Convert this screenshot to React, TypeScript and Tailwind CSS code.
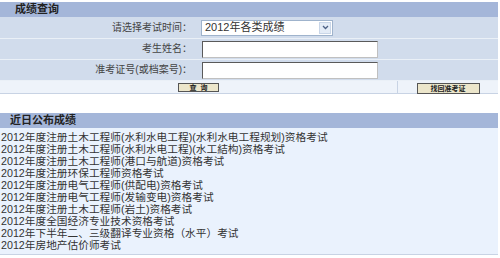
import React from "react";

const items = [
  "2012年度注册土木工程师(水利水电工程)(水利水电工程规划)资格考试",
  "2012年度注册土木工程师(水利水电工程)(水工結构)资格考试",
  "2012年度注册土木工程师(港口与航道)资格考试",
  "2012年度注册环保工程师资格考试",
  "2012年度注册电气工程师(供配电)资格考试",
  "2012年度注册电气工程师(发输变电)资格考试",
  "2012年度注册土木工程师(岩土)资格考试",
  "2012年度全国经济专业技术资格考试",
  "2012年下半年二、三级翻译专业资格（水平）考试",
  "2012年房地产估价师考试",
];

const font = { fontFamily: '"Liberation Sans", "Noto Sans CJK SC", sans-serif' };

export default function App() {
  return (
    <div className="w-[500px] h-[258px] bg-white overflow-hidden text-[#333]" style={font}>
      <div className="pt-[2px] w-[498px]">
        <div className="border-b border-[#c8d3e4]">
          <div className="h-[15px] bg-[#a4b6d9] flex items-center pl-[15px] text-[11px] font-bold text-[#222] leading-none">成绩查询</div>
          <div className="flex h-[22px] bg-[#d1dcec] border-b border-[#eaf0f7]">
            <div className="w-[199px] flex items-center justify-end pr-[7px] text-[10px] leading-none text-[#444]">请选择考试时间：</div>
            <div className="flex items-center pl-[2px]">
              <div className="w-[132px] h-[16px] bg-white border border-[#9fb3cc] flex items-center justify-between">
                <span className="text-[11px] leading-none pl-[3px] text-[#333]">2012年各类成绩</span>
                <span className="w-[12px] h-[12px] mr-[1px] bg-[#e4ecf7] border border-[#c9d6e8] flex items-center justify-center">
                  <svg width="7" height="5" viewBox="0 0 7 5"><path d="M1 1 L3.5 3.5 L6 1" stroke="#4d6185" strokeWidth="1.3" fill="none" /></svg>
                </span>
              </div>
            </div>
          </div>
          <div className="flex h-[21px] bg-[#d1dcec] border-b border-[#eaf0f7]">
            <div className="w-[199px] flex items-center justify-end pr-[7px] text-[10px] leading-none text-[#444]">考生姓名：</div>
            <div className="flex items-center pl-[3px]">
              <div className="w-[176px] h-[17px] bg-white border border-[#5a5a5a] border-b-[#c0c0c0] border-r-[#c0c0c0]" />
            </div>
          </div>
          <div className="flex h-[21px] bg-[#d1dcec] border-b border-[#eaf0f7]">
            <div className="w-[199px] flex items-center justify-end pr-[7px] text-[10px] leading-none text-[#444]">准考证号(或档案号)：</div>
            <div className="flex items-center pl-[3px]">
              <div className="w-[176px] h-[17px] bg-white border border-[#5a5a5a] border-b-[#c0c0c0] border-r-[#c0c0c0]" />
            </div>
          </div>
          <div className="flex h-[12px] bg-[#eef3fa]">
            <div className="w-[398px] flex items-start justify-center pt-[2px] border-r border-[#c8d3e4]">
              <div className="w-[41px] h-[9px] bg-[#ece6cb] border border-[#555] flex items-center justify-center text-[7px] font-bold leading-none text-[#222]">查&nbsp;&nbsp;询</div>
            </div>
            <div className="flex-1 flex items-start justify-center pt-[2px]">
              <div className="w-[63px] h-[11px] bg-[#ece6cb] border border-[#555] flex items-center justify-center text-[7px] font-bold leading-none text-[#222]">找回准考证</div>
            </div>
          </div>
        </div>
      </div>
      <div className="mt-[19px] w-[498px] border-b border-[#c8d3e4] bg-[#eaf2fd]">
        <div className="h-[15px] bg-[#a4b6d9] flex items-center pl-[10px] text-[11px] font-bold leading-none text-[#222]">近日公布成绩</div>
        <div className="pl-[1px] pt-[3px] pb-[3px]">
          {items.map((t) => (
            <div key={t} className="h-[12px] text-[10.7px] leading-[12px] text-[#333] whitespace-nowrap">{t}</div>
          ))}
        </div>
      </div>
    </div>
  );
}
